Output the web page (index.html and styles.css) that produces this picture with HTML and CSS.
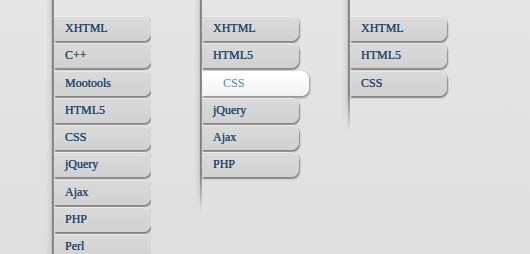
FILE: index.html
```html
<!DOCTYPE html>
<html>
<head>
<meta charset="utf-8">
<link rel="stylesheet" href="styles.css">
</head>
<body>
<div class="page">
  <div class="col col-full">
    <div class="rule"></div>
    <ul class="menu">
      <li class="item">XHTML</li>
      <li class="item">C++</li>
      <li class="item">Mootools</li>
      <li class="item">HTML5</li>
      <li class="item">CSS</li>
      <li class="item">jQuery</li>
      <li class="item">Ajax</li>
      <li class="item">PHP</li>
      <li class="item">Perl</li>
    </ul>
  </div>
  <div class="col">
    <div class="rule"></div>
    <ul class="menu">
      <li class="item">XHTML</li>
      <li class="item">HTML5</li>
      <li class="item active">CSS</li>
      <li class="item">jQuery</li>
      <li class="item">Ajax</li>
      <li class="item">PHP</li>
    </ul>
  </div>
  <div class="col">
    <div class="rule"></div>
    <ul class="menu">
      <li class="item">XHTML</li>
      <li class="item">HTML5</li>
      <li class="item">CSS</li>
    </ul>
  </div>
</div>
</body>
</html>
```
FILE: styles.css
```css
html, body {
  margin: 0;
  padding: 0;
  height: 254px;
  overflow: hidden;
}
body {
  background: linear-gradient(to bottom, #e5e5e5 0%, #dfdfdf 100%);
  font-family: "Liberation Serif", "Times New Roman", serif;
}
.page {
  display: flex;
  align-items: flex-start;
  padding-left: 46px;
  height: 254px;
  overflow: hidden;
}
.col {
  display: flex;
  align-items: stretch;
  margin-right: 43px;
}
.col-full {
  height: 254px;
  overflow: hidden;
}
.rule {
  width: 8px;
  flex: none;
  background: linear-gradient(to right, rgba(0,0,0,0) 0px, rgba(0,0,0,0.05) 4px, rgba(0,0,0,0.13) 6px, #8a8a8a 6px, #777 7px, #a5a5a5 8px);
  -webkit-mask-image: linear-gradient(to bottom, #000 calc(100% - 38px), rgba(0,0,0,0) 100%);
  mask-image: linear-gradient(to bottom, #000 calc(100% - 38px), rgba(0,0,0,0) 100%);
}
.col-full .rule {
  -webkit-mask-image: none;
  mask-image: none;
}
.menu {
  list-style: none;
  margin: 0;
  padding: 16px 0 36px 0;
  width: 97px;
  display: flex;
  flex-direction: column;
  gap: 2.3px;
}
.item {
  box-sizing: border-box;
  flex: none;
  width: 97px;
  height: 25px;
  line-height: 25px;
  padding-left: 11px;
  font-size: 12px;
  color: #24466a;
  text-shadow: 0 0 0.5px #24466a;
  background: linear-gradient(to bottom, #dadada 0%, #d1d1d1 100%);
  border-radius: 0 8px 8px 0;
  box-shadow: 1px 1.5px 1.5px rgba(0,0,0,0.42), inset 0 1px 0 rgba(255,255,255,0.45);
}
.item.active {
  width: 107px;
  padding-left: 21px;
  color: #3d8bc6;
  text-shadow: none;
  background: linear-gradient(to bottom, #ffffff 0%, #f3f3f3 100%);
  box-shadow: 1px 1.5px 2px rgba(0,0,0,0.35);
}
```
